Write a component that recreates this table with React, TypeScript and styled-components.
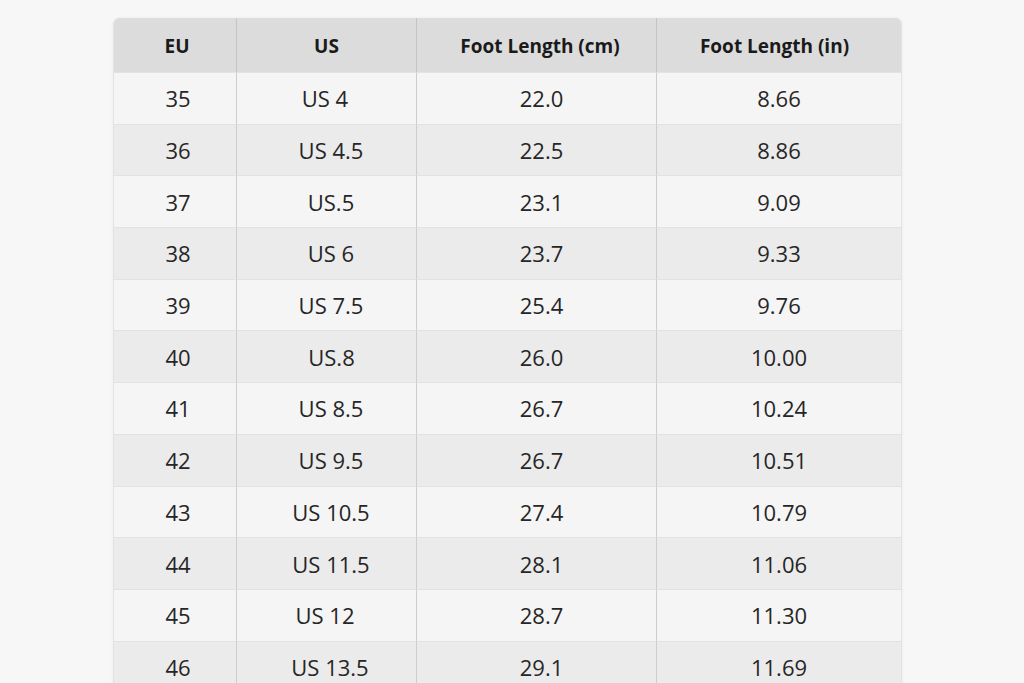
import React from "react";
import styled, { createGlobalStyle } from "styled-components";

const Global = createGlobalStyle`
  html, body { margin: 0; padding: 0; background: #f7f7f7; }
  body { font-family: "Open Sans", "Noto Sans", sans-serif; color: #1e1e1e; }
`;

const Page = styled.div`
  width: 1024px;
  height: 683px;
  overflow: hidden;
  padding: 18px 0 0 113px;
  box-sizing: border-box;
`;

const Table = styled.div`
  width: 787px;
  display: grid;
  grid-template-columns: 123px 180px 240px 244px;
  border-radius: 6px 6px 0 0;
  overflow: hidden;
  box-shadow: 0 0 3px rgba(0, 0, 0, 0.06);
  border-left: 1px solid #e3e3e3;
  border-right: 1px solid #e3e3e3;
`;

const shift = (dx: number) =>
  dx >= 0 ? `padding-left: ${dx}px;` : `padding-right: ${-dx}px;`;

const HeadCell = styled.div<{ $last?: boolean; $dx: number }>`
  height: 54px;
  box-sizing: border-box;
  background: #dcdcdc;
  display: flex;
  align-items: center;
  justify-content: center;
  font-weight: 700;
  font-size: 19px;
  color: #1a1a1a;
  padding-top: 2px;
  border-right: ${(p) => (p.$last ? "none" : "1px solid #c4c4c4")};
  ${(p) => shift(p.$dx)}
`;

const Cell = styled.div<{ $alt: boolean; $last?: boolean; $dx: number }>`
  height: 51.7px;
  box-sizing: border-box;
  background: ${(p) => (p.$alt ? "#ebebeb" : "#f5f5f5")};
  border-top: 1px solid #e2e2e2;
  border-right: ${(p) => (p.$last ? "none" : "1px solid #cdcdcd")};
  display: flex;
  align-items: center;
  justify-content: center;
  font-size: 22px;
  font-weight: 400;
  color: #262626;
  ${(p) => shift(p.$dx)}
`;

type Row = { eu: string; us: string; usDx: number; cm: string; inch: string };

const rows: Row[] = [
  { eu: "35", us: "US 4", usDx: -3, cm: "22.0", inch: "8.66" },
  { eu: "36", us: "US 4.5", usDx: 9, cm: "22.5", inch: "8.86" },
  { eu: "37", us: "US.5", usDx: 9, cm: "23.1", inch: "9.09" },
  { eu: "38", us: "US 6", usDx: 9, cm: "23.7", inch: "9.33" },
  { eu: "39", us: "US 7.5", usDx: 9, cm: "25.4", inch: "9.76" },
  { eu: "40", us: "US.8", usDx: 10, cm: "26.0", inch: "10.00" },
  { eu: "41", us: "US 8.5", usDx: 9, cm: "26.7", inch: "10.24" },
  { eu: "42", us: "US 9.5", usDx: 9, cm: "26.7", inch: "10.51" },
  { eu: "43", us: "US 10.5", usDx: 9, cm: "27.4", inch: "10.79" },
  { eu: "44", us: "US 11.5", usDx: 9, cm: "28.1", inch: "11.06" },
  { eu: "45", us: "US 12", usDx: -3, cm: "28.7", inch: "11.30" },
  { eu: "46", us: "US 13.5", usDx: 7, cm: "29.1", inch: "11.69" },
];

export default function App() {
  return (
    <>
      <Global />
      <Page>
        <Table>
          <HeadCell $dx={4}>EU</HeadCell>
          <HeadCell $dx={0}>US</HeadCell>
          <HeadCell $dx={7}>Foot Length (cm)</HeadCell>
          <HeadCell $dx={-9} $last>
            Foot Length (in)
          </HeadCell>
          {rows.map((r, i) => (
            <React.Fragment key={r.eu}>
              <Cell $alt={i % 2 === 1} $dx={6}>{r.eu}</Cell>
              <Cell $alt={i % 2 === 1} $dx={r.usDx}>{r.us}</Cell>
              <Cell $alt={i % 2 === 1} $dx={10}>{r.cm}</Cell>
              <Cell $alt={i % 2 === 1} $dx={0} $last>{r.inch}</Cell>
            </React.Fragment>
          ))}
        </Table>
      </Page>
    </>
  );
}
